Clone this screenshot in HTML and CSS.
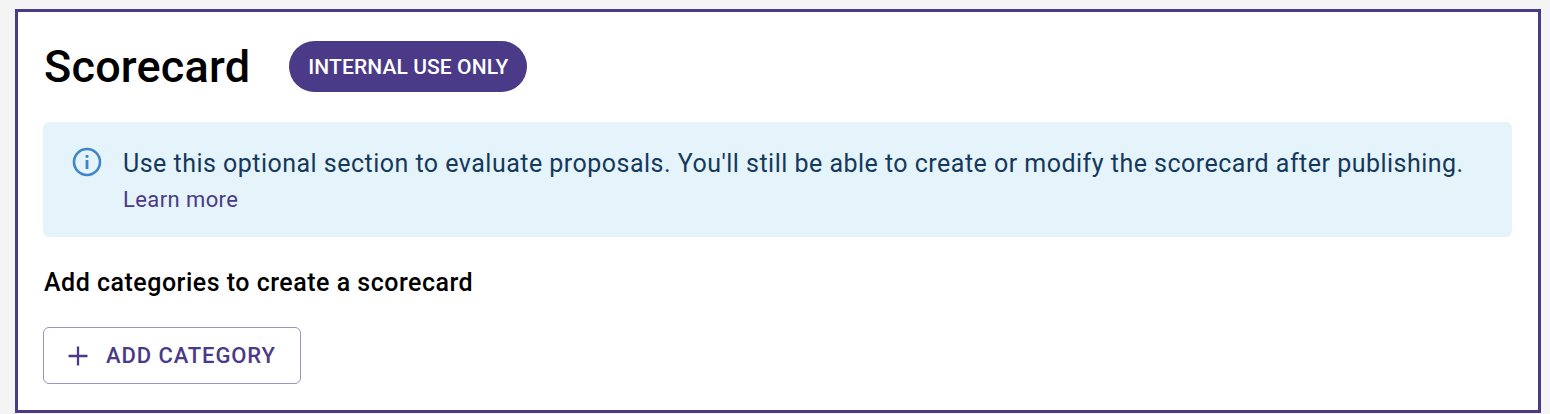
FILE: index.html
```html
<!DOCTYPE html>
<html lang="en">
<head>
    <meta charset="UTF-8">
    <title>Scorecard</title>
    <link rel="stylesheet" href="styles.css">
</head>
<body>

    <div class="frame">
        <div class="card">
            <!-- Title row -->
            <div class="title-row">
                <h1 class="title">Scorecard</h1>
                <span class="badge">INTERNAL USE ONLY</span>
            </div>

            <!-- Info banner -->
            <div class="banner">
                <svg class="info-icon" viewBox="0 0 30 30" aria-hidden="true">
                    <circle cx="15" cy="15" r="13" fill="none" stroke="#3f86c9" stroke-width="2.6"/>
                    <rect x="13.6" y="13" width="2.8" height="9" fill="#3f86c9"/>
                    <rect x="13.6" y="8" width="2.8" height="2.8" fill="#3f86c9"/>
                </svg>
                <div class="banner-text">
                    <div class="banner-message">Use this optional section to evaluate proposals. You'll still be able to create or modify the scorecard after publishing.</div>
                    <a class="banner-link" href="#">Learn more</a>
                </div>
            </div>

            <h2 class="subtitle">Add categories to create a scorecard</h2>

            <button class="add-button" type="button">
                <svg class="plus-icon" viewBox="0 0 20 20" aria-hidden="true">
                    <path d="M10 0.5v19M0.5 10h19" fill="none" stroke="#4a3a87" stroke-width="2.3"/>
                </svg>
                <span>ADD CATEGORY</span>
            </button>
        </div>
    </div>

</body>
</html>
```

FILE: styles.css
```css
html, body {
    height: 100%;
}

body {
    margin: 0;
    box-sizing: border-box;
    padding: 9px 9px 1px 15px;
    background-color: #f4f4f4;
    font-family: Roboto, "Liberation Sans", sans-serif;
    overflow: hidden;
}

.frame {
    box-sizing: border-box;
    height: 100%;
    border: 3px solid #4a3a87;
}

.card {
    box-sizing: border-box;
    height: 100%;
    padding: 29px 26px 0 25px;
    background-color: #fff;
    border-radius: 5px 5px 0 0;
}

/* Title row */
.title-row {
    display: flex;
    align-items: center;
    height: 51px;
}

.title {
    margin: 0 39px 0 1px;
    font-size: 45px;
    font-weight: 500;
    line-height: 52px;
    letter-spacing: 0.2px;
    color: #000;
}

.badge {
    display: flex;
    align-items: center;
    height: 51px;
    padding: 0 19px;
    border-radius: 26px;
    background-color: #4a3a87;
    color: #fff;
    font-size: 21px;
    font-weight: 500;
    letter-spacing: 0.1px;
}

/* Info banner */
.banner {
    display: flex;
    height: 115px;
    box-sizing: border-box;
    margin-top: 30px;
    padding: 25px 0 0 29px;
    background-color: #e5f3fb;
    border-radius: 6px;
}

.info-icon {
    width: 30px;
    height: 30px;
    margin-right: 21px;
}

.banner-message {
    margin-top: 1px;
    font-size: 25px;
    line-height: 32px;
    letter-spacing: 0.48px;
    color: #14395b;
}

.banner-link {
    display: block;
    margin-top: 6px;
    font-size: 22px;
    line-height: 28px;
    letter-spacing: 0.4px;
    color: #4a3a87;
    text-decoration: none;
}

.subtitle {
    margin: 30px 0 0 1px;
    font-size: 25px;
    font-weight: 500;
    line-height: 32px;
    letter-spacing: 0.5px;
    color: #000;
}

/* Add category button */
.add-button {
    display: flex;
    align-items: center;
    width: 258px;
    height: 57px;
    margin-top: 28px;
    padding: 0 0 0 24px;
    background-color: #fff;
    border: 1px solid #9d93c3;
    border-radius: 6px;
    color: #4a3a87;
    font-family: inherit;
    font-size: 22px;
    font-weight: 500;
    letter-spacing: 0.9px;
}

.plus-icon {
    width: 20px;
    height: 20px;
    margin-right: 18px;
}
```
